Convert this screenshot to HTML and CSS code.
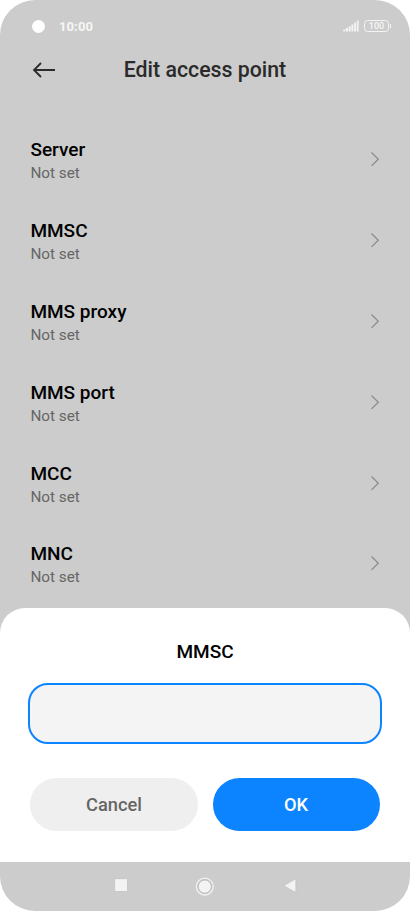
FILE: index.html
```html
<!DOCTYPE html>
<html lang="en">
<head>
    <meta charset="UTF-8">
    <title>Edit access point</title>
    <link rel="stylesheet" href="styles.css">
</head>
<body>

    <div class="phone">
        <!-- status bar -->
        <div class="status-bar">
            <span class="camera"></span>
            <span class="time">10:00</span>
            <svg class="signal" width="16" height="12" viewBox="0 0 16 12" fill="#f3f3f3">
                <rect x="0.3" y="9.3" width="2" height="2.2"/>
                <rect x="3" y="8" width="2" height="3.5"/>
                <rect x="5.7" y="6.3" width="2" height="5.2"/>
                <rect x="8.4" y="4.5" width="2" height="7"/>
                <rect x="11.1" y="2.5" width="2" height="9"/>
                <rect x="13.8" y="0.5" width="1.8" height="11"/>
            </svg>
            <span class="battery">100</span>
        </div>

        <header class="header">
            <svg class="back" width="24" height="16" viewBox="0 0 24 16" fill="none" stroke="#2a2a2a" stroke-width="1.8">
                <path d="M9 1 L2 8 L9 15 M2 8 H23"/>
            </svg>
            <h1>Edit access point</h1>
        </header>

        <!-- settings list -->
        <ul class="list">
            <li class="item">
                <div><h2>Server</h2><p>Not set</p></div>
                <svg width="10" height="16" viewBox="0 0 10 16"><path d="M1.5 1.5 L8.3 8.2 L1.5 14.9"/></svg>
            </li>
            <li class="item">
                <div><h2>MMSC</h2><p>Not set</p></div>
                <svg width="10" height="16" viewBox="0 0 10 16"><path d="M1.5 1.5 L8.3 8.2 L1.5 14.9"/></svg>
            </li>
            <li class="item">
                <div><h2>MMS proxy</h2><p>Not set</p></div>
                <svg width="10" height="16" viewBox="0 0 10 16"><path d="M1.5 1.5 L8.3 8.2 L1.5 14.9"/></svg>
            </li>
            <li class="item">
                <div><h2>MMS port</h2><p>Not set</p></div>
                <svg width="10" height="16" viewBox="0 0 10 16"><path d="M1.5 1.5 L8.3 8.2 L1.5 14.9"/></svg>
            </li>
            <li class="item">
                <div><h2>MCC</h2><p>Not set</p></div>
                <svg width="10" height="16" viewBox="0 0 10 16"><path d="M1.5 1.5 L8.3 8.2 L1.5 14.9"/></svg>
            </li>
            <li class="item">
                <div><h2>MNC</h2><p>Not set</p></div>
                <svg width="10" height="16" viewBox="0 0 10 16"><path d="M1.5 1.5 L8.3 8.2 L1.5 14.9"/></svg>
            </li>
        </ul>

        <!-- dialog -->
        <form class="dialog">
            <h2>MMSC</h2>
            <input type="text" aria-label="MMSC">
            <div class="buttons">
                <button type="button" class="cancel">Cancel</button>
                <button type="button" class="ok">OK</button>
            </div>
        </form>

        <!-- navigation bar -->
        <svg class="nav" width="410" height="49" viewBox="0 0 410 49" fill="#f3f3f3">
            <rect x="114.8" y="16.8" width="12.6" height="12.6" stroke="#bdbdbd" stroke-width="0.6"/>
            <circle cx="204.8" cy="24.6" r="8.4" fill="none" stroke="#f3f3f3" stroke-width="1.3"/>
            <circle cx="204.8" cy="24.6" r="6.6" stroke="#aaa" stroke-width="0.7"/>
            <path d="M283.8 23.7 L295.8 16.8 V30.6 Z" stroke="#bdbdbd" stroke-width="0.6"/>
        </svg>
    </div>

</body>
</html>
```
FILE: styles.css
```css
* {
    box-sizing: border-box;
    margin: 0;
    padding: 0;
}

body {
    background-color: #fff;
    font-family: Roboto, sans-serif;
}

h1, h2 {
    font-weight: 500;
}

.phone {
    width: 410px;
    height: 911px;
    display: flex;
    flex-direction: column;
    background-color: #ccc;
    border-radius: 35px;
    overflow: hidden;
}

.status-bar {
    height: 50px;
    padding: 2px 21px 0 32px;
    display: flex;
    align-items: center;
    color: #f6f6f6;
}

.camera {
    width: 13px;
    height: 13px;
    border-radius: 50%;
    background-color: #fff;
}

.time {
    margin-left: 14px;
    font-size: 13px;
    font-weight: 700;
    letter-spacing: 0.1px;
}

.signal {
    margin-left: auto;
    margin-right: 5px;
}

.battery {
    position: relative;
    width: 25px;
    height: 12px;
    border: 1.5px solid #f3f3f3;
    border-radius: 3.5px;
    font-size: 9px;
    font-weight: 500;
    line-height: 10px;
    text-align: center;
}

.battery::after {
    content: "";
    position: absolute;
    top: 3px;
    right: -3px;
    width: 1px;
    height: 4px;
    background-color: #f3f3f3;
}

.header {
    height: 69px;
    padding: 8px 32px 0;
    display: grid;
    grid-template-columns: 24px 1fr 24px;
}

.back {
    margin-top: 4px;
}

.header h1 {
    font-size: 21.3px;
    line-height: 24px;
    text-align: center;
    color: #2a2a2a;
}

.list {
    height: 489px;
    list-style: none;
}

.item {
    height: 80.8px;
    padding: 0 30px;
    display: flex;
    align-items: center;
    justify-content: space-between;
}

.item div {
    padding: 4px 0 0 0.4px;
}

.item h2 {
    font-size: 19px;
    line-height: 24px;
    color: #000;
}

.item p {
    font-size: 15.3px;
    line-height: 22px;
    color: #666;
}

.item path {
    fill: none;
    stroke: #8c8c8c;
    stroke-width: 1.3;
}

.dialog {
    height: 254px;
    padding: 32px 28px 0;
    background-color: #fff;
    border-radius: 25px 25px 0 0;
}

.dialog h2 {
    font-size: 19px;
    line-height: 24px;
    text-align: center;
}

.dialog input {
    display: block;
    width: 354px;
    height: 61px;
    margin-top: 19px;
    padding: 0 18px;
    border: 2px solid #0d84ff;
    border-radius: 20px;
    background-color: #f4f4f4;
    font: inherit;
    outline: none;
}

.buttons {
    display: flex;
    gap: 15px;
    margin: 34px 2.4px 0;
}

.buttons button {
    flex: 1;
    height: 53px;
    border: none;
    border-radius: 27px;
    font-family: inherit;
    font-size: 18.3px;
    font-weight: 500;
}

.cancel {
    background-color: #efefef;
    color: #666;
}

.ok {
    background-color: #0d84ff;
    color: #fff;
}

.nav {
    display: block;
}
```
